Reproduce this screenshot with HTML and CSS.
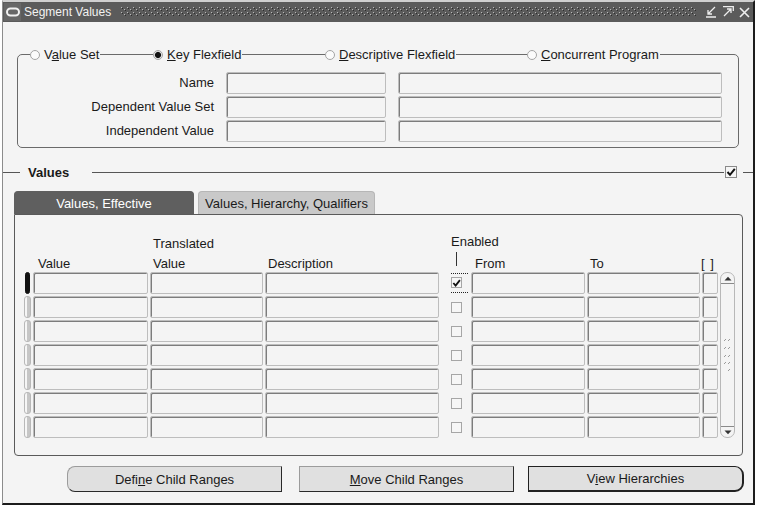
FILE: index.html
```html
<!DOCTYPE html>
<html lang="en">
<head>
    <meta charset="UTF-8">
    <title>Segment Values</title>
    <link rel="stylesheet" href="styles.css">
</head>
<body>
<div class="window">
    <!-- title bar -->
    <div class="titlebar">
        <span class="title-icon">
            <svg width="16" height="16" viewBox="0 0 16 16"><rect x="2" y="4.5" width="12" height="7" rx="3.5" fill="none" stroke="#f0f0f0" stroke-width="2"/></svg>
        </span>
        <span class="title-text">Segment Values</span>
        <svg class="title-dots" height="10">
            <defs>
                <pattern id="dots" width="6" height="5" patternUnits="userSpaceOnUse">
                    <rect x="0" y="0" width="1" height="1" fill="#b8b8b8"/>
                    <rect x="1" y="1" width="1" height="1" fill="#2e2e2e"/>
                    <rect x="3" y="2" width="1" height="1" fill="#b8b8b8"/>
                    <rect x="4" y="3" width="1" height="1" fill="#2e2e2e"/>
                </pattern>
            </defs>
            <rect width="100%" height="100%" fill="url(#dots)"/>
        </svg>
        <span class="title-btns">
            <svg width="12" height="12" viewBox="0 0 12 12"><path d="M10 1 L3 8 M3 4 L3 8 L7 8 M1 11 L11 11" stroke="#eee" stroke-width="1.3" fill="none"/></svg>
            <svg width="12" height="12" viewBox="0 0 12 12"><path d="M2 10 L9 3 M5 3 L9 3 L9 7 M1 0.7 L11.3 0.7 L11.3 5" stroke="#eee" stroke-width="1.3" fill="none"/></svg>
            <svg width="11" height="11" viewBox="0 0 11 11"><path d="M1 1 L10 10 M10 1 L1 10" stroke="#eee" stroke-width="1.6" fill="none"/></svg>
        </span>
    </div>

    <!-- flexfield frame -->
    <div class="frame">
        <div class="radio-row">
            <div class="radio-item w1"><span class="radio"><i class="circle"></i><span>V<u>a</u>lue Set</span></span></div>
            <div class="radio-item w2"><span class="radio"><i class="circle on"></i><span><u>K</u>ey Flexfield</span></span></div>
            <div class="radio-item w3"><span class="radio"><i class="circle"></i><span><u>D</u>escriptive Flexfield</span></span></div>
            <div class="radio-item"><span class="radio"><i class="circle"></i><span><u>C</u>oncurrent Program</span></span></div>
        </div>
        <div class="field-grid">
            <span class="label">Name</span><div class="fld"></div><div class="fld"></div>
            <span class="label">Dependent Value Set</span><div class="fld"></div><div class="fld"></div>
            <span class="label">Independent Value</span><div class="fld"></div><div class="fld"></div>
        </div>
    </div>

    <!-- values section -->
    <div class="section-head">
        <span class="rule lead"></span>
        <span class="section-title">Values</span>
        <span class="rule grow"></span>
        <span class="cb head-cb"><svg width="10" height="10" viewBox="0 0 10 10"><path d="M1.5 5 L4 7.8 L8.8 1.8" stroke="#111" stroke-width="2" fill="none"/></svg></span>
        <span class="rule tail"></span>
    </div>

    <div class="tabs">
        <div class="tab active">Values, Effective</div>
        <div class="tab">Values, Hierarchy, Qualifiers</div>
    </div>

    <div class="panel">
        <div class="thead">
            <span class="h c2 r1">Translated</span>
            <span class="h-enabled">Enabled<i class="tick"></i></span>
            <span class="h c1 r2">Value</span>
            <span class="h c2 r2">Value</span>
            <span class="h c3 r2">Description</span>
            <span class="h c6 r2">From</span>
            <span class="h c7 r2">To</span>
            <span class="h c8 r2 brackets">[ ]</span>
        </div>

        <div class="rows">
            <div class="vscroll">
                <div class="sb-up"><svg width="8" height="5" viewBox="0 0 8 5"><path d="M0.5 4.5 L4 0.8 L7.5 4.5 Z" fill="#333"/></svg></div>
                <svg class="grip" width="9" height="36" viewBox="0 0 9 36">
                    <g stroke="#9a9a9a" stroke-width="1">
                        <path d="M1 4 L3 2 M5 4 L7 2"/>
                        <path d="M1 12 L3 10 M5 12 L7 10"/>
                        <path d="M1 20 L3 18 M5 20 L7 18"/>
                        <path d="M1 27 L3 25 M5 27 L7 25"/>
                        <path d="M5 34 L7 32"/>
                    </g>
                </svg>
                <div class="sb-down"><svg width="8" height="5" viewBox="0 0 8 5"><path d="M0.5 0.5 L4 4.2 L7.5 0.5 Z" fill="#333"/></svg></div>
            </div>

            <div class="ind current"></div><div class="fld"></div><div class="fld"></div><div class="fld"></div>
            <div class="chk"><span class="focus"><span class="cb"><svg width="10" height="10" viewBox="0 0 10 10"><path d="M1.5 5 L4 7.8 L8.8 1.8" stroke="#111" stroke-width="2" fill="none"/></svg></span></span></div>
            <div class="fld"></div><div class="fld"></div><div class="fld"></div>

            <div class="ind"></div><div class="fld"></div><div class="fld"></div><div class="fld"></div>
            <div class="chk"><span class="cb"></span></div><div class="fld"></div><div class="fld"></div><div class="fld"></div>

            <div class="ind"></div><div class="fld"></div><div class="fld"></div><div class="fld"></div>
            <div class="chk"><span class="cb"></span></div><div class="fld"></div><div class="fld"></div><div class="fld"></div>

            <div class="ind"></div><div class="fld"></div><div class="fld"></div><div class="fld"></div>
            <div class="chk"><span class="cb"></span></div><div class="fld"></div><div class="fld"></div><div class="fld"></div>

            <div class="ind"></div><div class="fld"></div><div class="fld"></div><div class="fld"></div>
            <div class="chk"><span class="cb"></span></div><div class="fld"></div><div class="fld"></div><div class="fld"></div>

            <div class="ind"></div><div class="fld"></div><div class="fld"></div><div class="fld"></div>
            <div class="chk"><span class="cb"></span></div><div class="fld"></div><div class="fld"></div><div class="fld"></div>

            <div class="ind"></div><div class="fld"></div><div class="fld"></div><div class="fld"></div>
            <div class="chk"><span class="cb"></span></div><div class="fld"></div><div class="fld"></div><div class="fld"></div>
        </div>
    </div>

    <!-- buttons -->
    <div class="buttons">
        <button class="btn first">Defi<u>n</u>e Child Ranges</button>
        <button class="btn middle"><u>M</u>ove Child Ranges</button>
        <button class="btn default">V<u>i</u>ew Hierarchies</button>
    </div>
</div>
</body>
</html>
```

FILE: styles.css
```css
/* reset */
* {
    margin: 0;
    padding: 0;
    box-sizing: border-box;
}

body {
    background: #fff;
    font-family: "Liberation Sans", Arial, sans-serif;
    font-size: 13px;
    color: #1a1a1a;
}

/* window */
.window {
    margin-left: 2px;
    width: 753px;
    background: #f4f4f4;
    border-top: 2px solid #d0d0d0;
    border-left: 1px solid #8c8c8c;
    border-right: 2px solid #1c1c1c;
    border-bottom: 2px solid #1c1c1c;
}

.titlebar {
    display: flex;
    align-items: center;
    height: 20px;
    background: #5b5b5b;
}

.title-icon {
    display: flex;
    width: 17px;
    height: 18px;
    margin-left: 1px;
    align-items: center;
    justify-content: center;
    background: #676767;
}

.title-text {
    margin-left: 3px;
    font-size: 12px;
    color: #f2f2f2;
}

.title-dots {
    flex: 1;
    margin: 0 8px 0 10px;
}

.title-btns {
    display: flex;
    align-items: center;
    gap: 5px;
    padding-right: 3px;
}

/* flexfield frame */
.frame {
    margin: 32px 14px 0;
    padding-bottom: 5px;
    border: 1px solid #6a6a6a;
    border-radius: 5px;
}

.radio-row {
    display: flex;
    height: 15px;
    margin-top: -8px;
    padding-left: 12px;
    line-height: 15px;
}

.radio-item.w1 { width: 123px; }
.radio-item.w2 { width: 172px; }
.radio-item.w3 { width: 202px; }

.radio {
    display: inline-flex;
    align-items: center;
    gap: 4px;
    padding-right: 1px;
    background: #f4f4f4;
    white-space: nowrap;
}

.circle {
    width: 10px;
    height: 10px;
    border: 1px solid #a4a4a4;
    border-radius: 50%;
    background: #fbfbfb;
}

.circle.on {
    background: radial-gradient(circle, #111 0 2.6px, #9a9a9a 3.2px, #e8e8e8 3.6px);
}

.field-grid {
    display: grid;
    grid-template-columns: 196px 160px 324px;
    grid-auto-rows: 22px;
    column-gap: 12px;
    row-gap: 2px;
    margin-top: 10px;
}

.label {
    text-align: right;
    line-height: 22px;
}

.fld {
    border: 1px solid #bdbdbd;
    border-radius: 2px;
    background: #f4f4f4;
    box-shadow: inset 1px 1px 0 #7c7c7c;
}

/* values section header */
.section-head {
    display: flex;
    align-items: center;
    height: 16px;
    margin-top: 16px;
}

.rule {
    height: 1px;
    background: #555;
}

.rule.lead { width: 17px; }
.rule.grow { flex: 1; margin-left: 23px; }
.rule.tail { width: 10px; margin-left: 6px; }

.section-title {
    margin-left: 8px;
    font-weight: bold;
}

.cb {
    display: flex;
    align-items: center;
    justify-content: center;
    width: 11px;
    height: 11px;
    border: 1px solid #a6a6a6;
    background: #f6f6f6;
}

.head-cb {
    width: 12px;
    height: 12px;
    margin-left: 1px;
    border-color: #8a8a8a;
}

/* tabs */
.tabs {
    display: flex;
    gap: 4px;
    margin: 11px 0 0 11px;
}

.tab {
    width: 177px;
    height: 23px;
    line-height: 23px;
    text-align: center;
    background: #c9c9c9;
    border: 1px solid #b6b6b6;
    border-bottom: none;
    border-radius: 4px 4px 0 0;
}

.tab.active {
    width: 180px;
    background: #5f5f5f;
    border-color: #5f5f5f;
    color: #fff;
}

.panel {
    margin: 0 10px 0 11px;
    padding: 21px 0 17px 9px;
    border: 1px solid #5a5a5a;
    border-radius: 0 4px 4px 4px;
}

/* table */
.thead,
.rows {
    display: grid;
    grid-template-columns: 7px 115px 113px 174px 28px 114px 113px 16px 15px;
    column-gap: 2px;
}

.thead {
    grid-template-rows: 20px 16px;
    line-height: 16px;
}

.h {
    padding-left: 4px;
    white-space: nowrap;
}

.r1 { grid-row: 1; }
.r2 { grid-row: 2; }
.c1 { grid-column: 2; padding-left: 5px; }
.c2 { grid-column: 3; padding-left: 3px; }
.c3 { grid-column: 4; padding-left: 3px; }
.c6 { grid-column: 6; }
.c7 { grid-column: 7; padding-left: 3px; }
.c8 { grid-column: 8; }

.brackets {
    padding-left: 0;
    margin-left: -1px;
    word-spacing: 2px;
}

.h-enabled {
    grid-column: 5;
    grid-row: 1 / span 2;
    margin-top: -2px;
    padding-left: 10px;
    white-space: nowrap;
}

.tick {
    display: block;
    width: 1px;
    height: 14px;
    margin: 2px 0 0 5px;
    background: #333;
}

.rows {
    grid-auto-rows: 22px;
    row-gap: 2px;
}

.ind {
    border: 1px solid #b8b8b8;
    border-radius: 3px;
    background: linear-gradient(to right, #f6f6f6 0 45%, #c6c6c6 45%);
}

.ind.current {
    margin: 0 1px;
    border-color: #111;
    background: #111;
}

.chk {
    display: flex;
    align-items: center;
    padding-left: 10px;
}

.focus {
    display: block;
    padding: 3px 6px 4px 0;
    border-top: 1px dotted #222;
    border-bottom: 1px dotted #222;
}

.vscroll {
    grid-column: 9;
    grid-row: 1 / span 7;
    display: flex;
    flex-direction: column;
    justify-content: space-between;
    align-items: center;
    border: 1px solid #b8b8b8;
    border-radius: 7px;
}

.sb-up,
.sb-down {
    display: flex;
    align-items: center;
    justify-content: center;
    width: 100%;
    height: 11px;
}

.sb-up { border-bottom: 1px solid #8a8a8a; }
.sb-down { border-top: 1px solid #8a8a8a; }

/* buttons */
.buttons {
    display: flex;
    padding: 10px 0 11px 64px;
}

.btn {
    width: 215px;
    height: 26px;
    font: inherit;
    color: #1a1a1a;
    background: #e0e0e0;
    border: 1px solid #9c9c9c;
    border-right-color: #2a2a2a;
    border-bottom-color: #2a2a2a;
}

.btn.first {
    border-radius: 8px 0 0 8px;
}

.btn.middle {
    margin-left: 17px;
}

.btn.default {
    width: 216px;
    margin-left: 14px;
    border: 1px solid #222;
    border-right-width: 2px;
    border-bottom-width: 2px;
    border-radius: 0 9px 9px 0;
}
```
